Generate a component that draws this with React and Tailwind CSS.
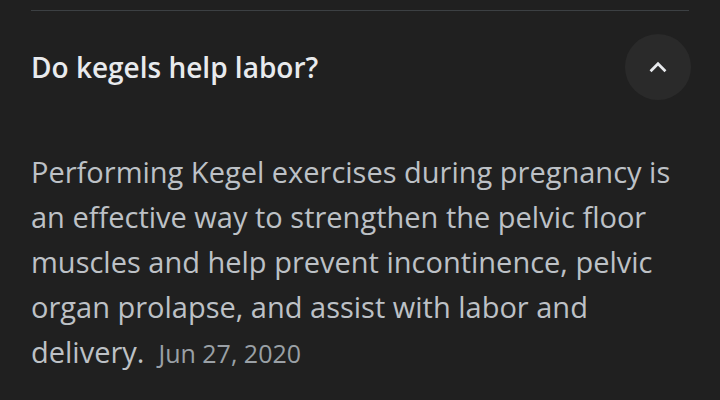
export default function App() {
  return (
    <div className="w-[720px] h-[400px] overflow-hidden bg-[#202020] px-[31px] pt-[10px]" style={{ fontFamily: "'Open Sans', 'Noto Sans', sans-serif" }}>
      <div className="border-t border-[#3c4043]" />
      <div className="flex h-[112px] items-center justify-between">
        <h2 className="text-[28px] font-semibold text-[#e8eaed]">Do kegels help labor?</h2>
        <button className="-mr-[2px] flex h-[66px] w-[66px] items-center justify-center rounded-full bg-[#2a2a2a]">
          <svg width="26" height="26" viewBox="0 0 24 24" fill="none" stroke="#e8eaed" strokeWidth="2.5" strokeLinecap="square">
            <path d="M6 15l6-6 6 6" />
          </svg>
        </button>
      </div>
      <p className="mt-[26px] whitespace-nowrap text-[29px] leading-[45px] text-[#bdc1c6]">
        Performing Kegel exercises during pregnancy is<br />
        an effective way to strengthen the pelvic floor<br />
        muscles and help prevent incontinence, pelvic<br />
        organ prolapse, and assist with labor and<br />
        delivery.
        <span className="ml-[14px] text-[25px] text-[#9aa0a6]">Jun 27, 2020</span>
      </p>
    </div>
  );
}
